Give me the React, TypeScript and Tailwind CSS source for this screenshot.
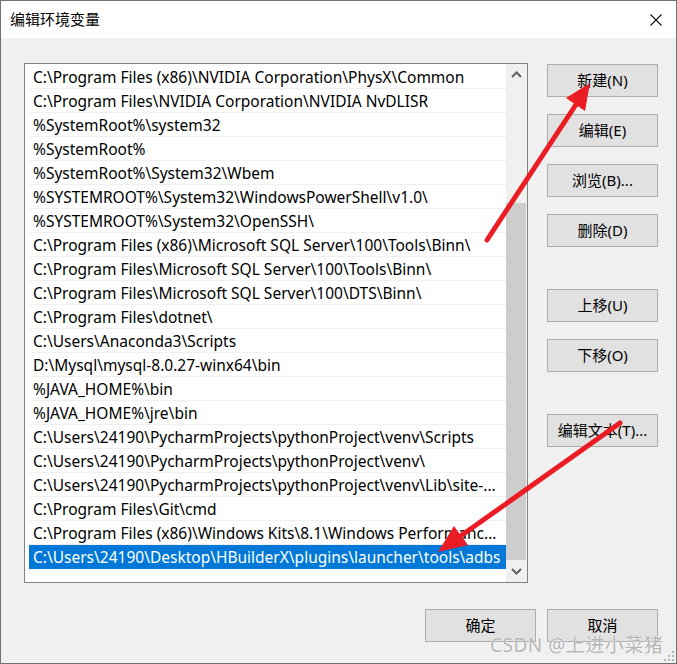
import React from 'react'

const paths = [
  'C:\\Program Files (x86)\\NVIDIA Corporation\\PhysX\\Common',
  'C:\\Program Files\\NVIDIA Corporation\\NVIDIA NvDLISR',
  '%SystemRoot%\\system32',
  '%SystemRoot%',
  '%SystemRoot%\\System32\\Wbem',
  '%SYSTEMROOT%\\System32\\WindowsPowerShell\\v1.0\\',
  '%SYSTEMROOT%\\System32\\OpenSSH\\',
  'C:\\Program Files (x86)\\Microsoft SQL Server\\100\\Tools\\Binn\\',
  'C:\\Program Files\\Microsoft SQL Server\\100\\Tools\\Binn\\',
  'C:\\Program Files\\Microsoft SQL Server\\100\\DTS\\Binn\\',
  'C:\\Program Files\\dotnet\\',
  'C:\\Users\\Anaconda3\\Scripts',
  'D:\\Mysql\\mysql-8.0.27-winx64\\bin',
  '%JAVA_HOME%\\bin',
  '%JAVA_HOME%\\jre\\bin',
  'C:\\Users\\24190\\PycharmProjects\\pythonProject\\venv\\Scripts',
  'C:\\Users\\24190\\PycharmProjects\\pythonProject\\venv\\',
  'C:\\Users\\24190\\PycharmProjects\\pythonProject\\venv\\Lib\\site-...',
  'C:\\Program Files\\Git\\cmd',
  'C:\\Program Files (x86)\\Windows Kits\\8.1\\Windows Performanc...',
  'C:\\Users\\24190\\Desktop\\HBuilderX\\plugins\\launcher\\tools\\adbs',
]

function WinButton({ label, className = '' }: { label: string; className?: string }) {
  return (
    <button className={`flex h-[33px] w-[111px] items-center justify-center border border-[#adadad] bg-[#e1e1e1] text-[15px] text-black ${className}`}>
      {label}
    </button>
  )
}

function Chevron({ down }: { down?: boolean }) {
  return (
    <svg width="11" height="7" viewBox="0 0 11 7">
      <polyline
        points={down ? '1,1 5.5,5.5 10,1' : '1,6 5.5,1.5 10,6'}
        fill="none"
        stroke="#606060"
        strokeWidth="2"
      />
    </svg>
  )
}

export default function App() {
  return (
    <div className="relative h-[664px] w-[677px] overflow-hidden border border-[#707070] bg-[#f0f0f0] font-['Noto_Sans','Noto_Sans_CJK_SC',sans-serif] text-black">
      {/* title bar */}
      <div className="flex h-[37px] items-center justify-between bg-white pl-[9px] pr-[14px]">
        <span className="text-[15px]">编辑环境变量</span>
        <svg width="12" height="12" viewBox="0 0 12 12">
          <path d="M0.5 0.5 L11.5 11.5 M11.5 0.5 L0.5 11.5" stroke="#111" strokeWidth="1.1" />
        </svg>
      </div>

      <div className="pl-[23px] pt-[25px]">
        <div className="flex">
          {/* path list */}
          <div className="flex h-[520px] w-[504px] border border-[#828282] bg-white">
            <div className="flex-1 pl-[4px] pt-px">
              {paths.map((p, i) => {
                const selected = i === paths.length - 1
                return (
                  <div
                    key={p}
                    className={`h-[24px] overflow-hidden whitespace-nowrap border-b pl-[4px] text-[15.5px] leading-[24px] ${
                      selected ? 'border-[#0078d7] bg-[#0078d7] text-white' : 'border-[#f0f0f0]'
                    }`}
                  >
                    {p}
                  </div>
                )
              })}
            </div>
            <div className="flex w-[21px] flex-col bg-[#f0f0f0]">
              <div className="flex h-[21px] items-center justify-center">
                <Chevron />
              </div>
              <div className="mt-[118px] h-[357px] w-[20px] bg-[#cdcdcd]" />
              <div className="flex flex-1 items-center justify-center">
                <Chevron down />
              </div>
            </div>
          </div>

          {/* action buttons */}
          <div className="ml-[19px] mt-px flex flex-col">
            <WinButton label="新建(N)" />
            <WinButton label="编辑(E)" className="mt-[17px]" />
            <WinButton label="浏览(B)..." className="mt-[17px]" />
            <WinButton label="删除(D)" className="mt-[17px]" />
            <WinButton label="上移(U)" className="mt-[42px]" />
            <WinButton label="下移(O)" className="mt-[17px]" />
            <WinButton label="编辑文本(T)..." className="mt-[42px]" />
          </div>
        </div>

        <div className="mt-[26px] flex pl-[401px]">
          <WinButton label="确定" />
          <WinButton label="取消" className="ml-[11px]" />
        </div>
      </div>

      {/* annotation arrows */}
      <svg className="pointer-events-none absolute left-[-1px] top-[-1px]" width="677" height="664">
        <line x1="487" y1="240" x2="577" y2="103" stroke="#ec1c24" strokeWidth="5" strokeLinecap="round" />
        <polygon points="590,83 585,111 566,98" fill="#ec1c24" />
        <line x1="620" y1="423" x2="462" y2="535" stroke="#ec1c24" strokeWidth="5" strokeLinecap="round" />
        <polygon points="438,552 468,545 454,526" fill="#ec1c24" />
      </svg>

      {/* watermark */}
      <div className="absolute left-[489px] top-[632px] text-[19px] leading-[24px] tracking-[0.5px] text-[#b4b4b4] [text-shadow:0_0_1px_#fff,0_0_1px_#fff]">
        CSDN @上进小菜猪
      </div>

      {/* resize grip */}
      <svg className="absolute bottom-[1px] right-[1px]" width="12" height="12" viewBox="0 0 12 12">
        {[
          [9, 1], [9, 5], [5, 5], [9, 9], [5, 9], [1, 9],
        ].map(([x, y]) => (
          <rect key={`${x}-${y}`} x={x} y={y} width="2" height="2" fill="#b8b8b8" />
        ))}
      </svg>
    </div>
  )
}
